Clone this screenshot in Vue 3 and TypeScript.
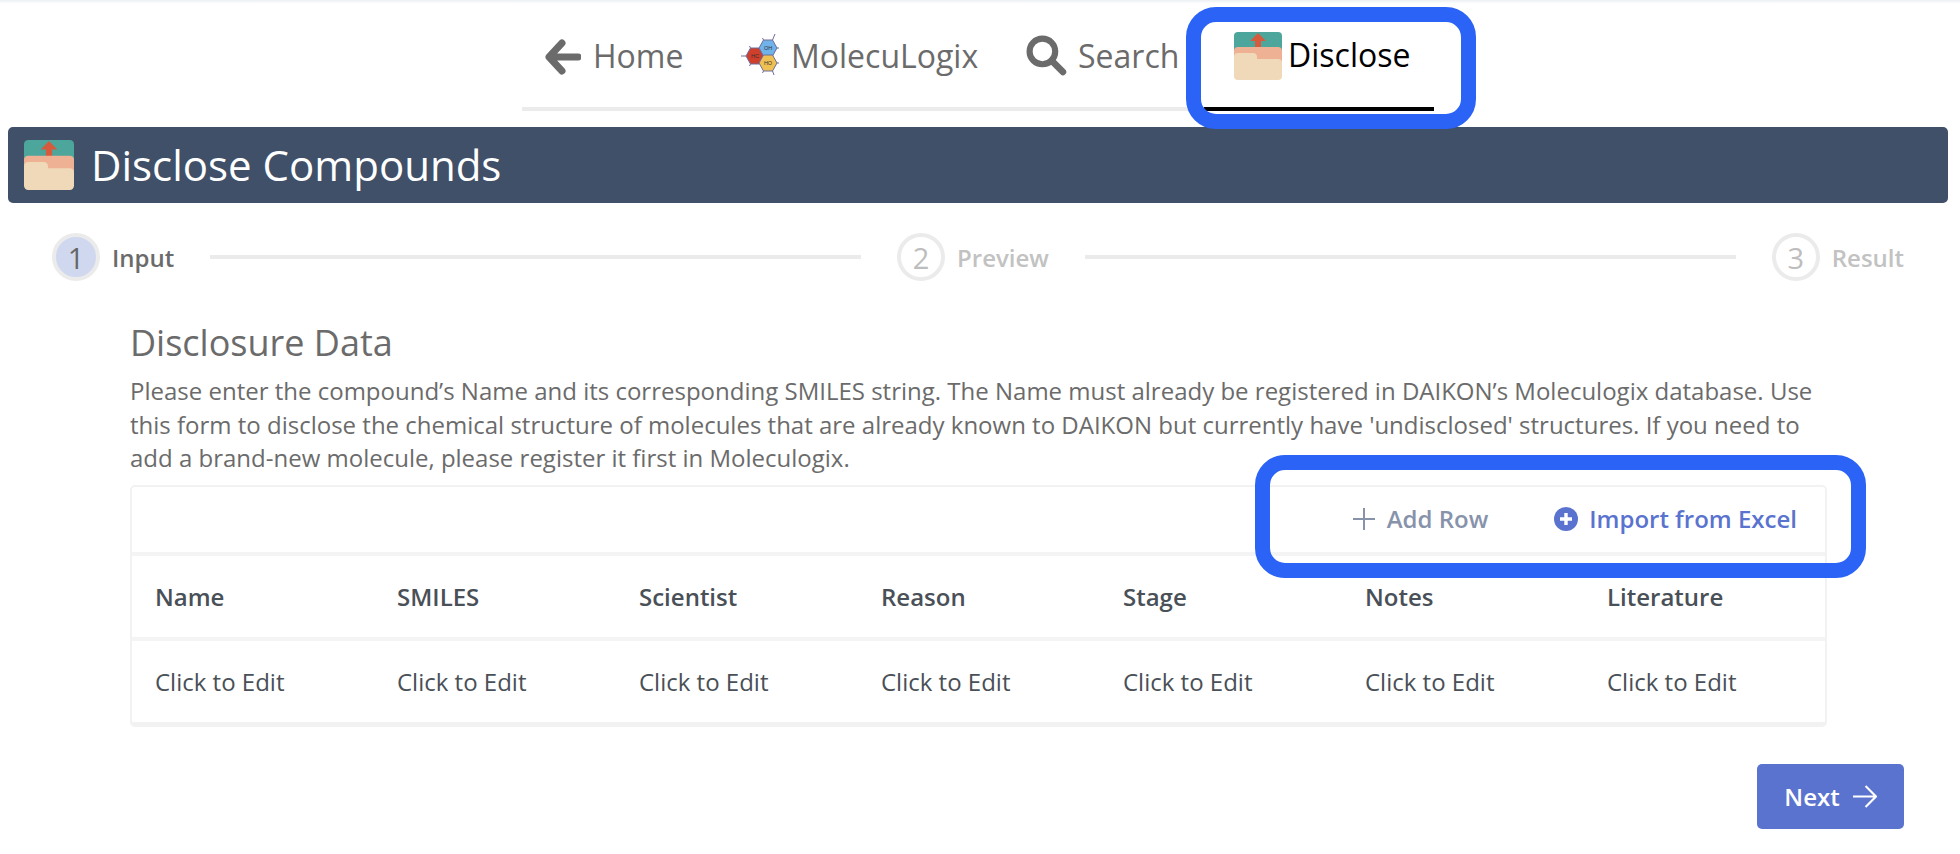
<script setup lang="ts">
const columns: string[] = ['Name', 'SMILES', 'Scientist', 'Reason', 'Stage', 'Notes', 'Literature']
</script>

<template>
  <div class="page">
    <div class="topshade"></div>
    <nav class="nav">
      <div class="tabs">
        <a class="tab tab-home">
          <svg class="ico-arrow" viewBox="0 0 36 36"><path d="M17 4 4 18l13 14M5 18h28" fill="none" stroke="#6b6b6b" stroke-width="7" stroke-linecap="round" stroke-linejoin="round" /></svg>
          <span>Home</span>
        </a>
        <a class="tab tab-mol">
          <svg class="ico-mol" viewBox="0 0 38 42">
            <g stroke="#6d6d9a" stroke-width="1">
              <path d="M0 22h5M31.500 6 34 0M36 14h2M36 29h2M31.500 37 33 41M22.500 6l-1-2M22.500 37l-1 2M9.500 14l-1-2M9.500 30l-1 2" fill="none" />
              <path d="M5 22l4.500-8h9l4.500 8-4.500 8h-9z" fill="#cf3f2b" />
              <path d="M18 14l4.500-8h9l4.500 8-4.500 8h-9z" fill="#70b2ea" />
              <path d="M18 29l4.500-8h9l4.500 8-4.500 8h-9z" fill="#efc053" />
            </g>
            <g class="mol-txt" font-size="5.500" text-anchor="middle" fill="#333">
              <text x="14" y="24">HC</text>
              <text x="27" y="16">OH</text>
              <text x="27" y="31">HO</text>
            </g>
          </svg>
          <span>MolecuLogix</span>
        </a>
        <a class="tab tab-search">
          <svg class="ico-search" viewBox="0 0 40 40"><circle cx="16" cy="16" r="12.500" fill="none" stroke="#6b6b6b" stroke-width="6" /><path d="M25 25l11 11" stroke="#6b6b6b" stroke-width="6.500" stroke-linecap="round" /></svg>
          <span>Search</span>
        </a>
        <a class="tab tab-active">
          <svg class="ico-folder" viewBox="0 0 48 48">
            <rect width="48" height="40" rx="4" fill="#4ca69c" />
            <path d="M24 1l8 8h-5v8h-6V9h-5z" fill="#d65b3c" />
            <path d="M0 19a4 4 0 0 1 4-4h40a4 4 0 0 1 4 4v25H0z" fill="#eeb193" />
            <path d="M0 25a4 4 0 0 1 4-4h15a4 4 0 0 1 4 4v2h21a4 4 0 0 1 4 4v13a4 4 0 0 1-4 4H4a4 4 0 0 1-4-4z" fill="#f0d9b8" />
          </svg>
          <span>Disclose</span>
        </a>
      </div>
    </nav>

    <header class="banner">
      <svg class="ico-banner" viewBox="0 0 48 48">
        <rect width="48" height="40" rx="4" fill="#4ca69c" />
        <path d="M24 1l8 8h-5v8h-6V9h-5z" fill="#d65b3c" />
        <path d="M0 19a4 4 0 0 1 4-4h40a4 4 0 0 1 4 4v25H0z" fill="#eeb193" />
        <path d="M0 25a4 4 0 0 1 4-4h15a4 4 0 0 1 4 4v2h21a4 4 0 0 1 4 4v13a4 4 0 0 1-4 4H4a4 4 0 0 1-4-4z" fill="#f0d9b8" />
      </svg>
      <h1>Disclose Compounds</h1>
    </header>

    <div class="steps">
      <div class="step step-on"><span class="num">1</span><span class="label">Input</span></div>
      <div class="line"></div>
      <div class="step"><span class="num">2</span><span class="label">Preview</span></div>
      <div class="line"></div>
      <div class="step"><span class="num">3</span><span class="label">Result</span></div>
    </div>

    <main class="content">
      <h2>Disclosure Data</h2>
      <p class="desc">Please enter the compound’s Name and its corresponding SMILES string. The Name must already be registered in DAIKON’s Moleculogix database. Use this form to disclose the chemical structure of molecules that are already known to DAIKON but currently have 'undisclosed' structures. If you need to add a brand-new molecule, please register it first in Moleculogix.</p>

      <section class="table">
        <div class="toolbar">
          <button class="tbtn tbtn-grey">
            <svg class="ico-plus" viewBox="0 0 24 24"><path d="M12 1v22M1 12h22" stroke="#8793ab" stroke-width="2" fill="none" /></svg>
            <span>Add Row</span>
          </button>
          <button class="tbtn tbtn-blue">
            <svg class="ico-cplus" viewBox="0 0 24 24"><circle cx="12" cy="12" r="12" fill="#5a73cf" /><path d="M12 6v12M6 12h12" stroke="#fff" stroke-width="3.400" fill="none" /></svg>
            <span>Import from Excel</span>
          </button>
        </div>
        <div class="grid head">
          <div v-for="c in columns" :key="c" class="cell">{{ c }}</div>
        </div>
        <div class="grid body">
          <div v-for="c in columns" :key="c" class="cell">Click to Edit</div>
        </div>
      </section>

      <div class="actions">
        <button class="next">
          <span>Next</span>
          <svg class="ico-next" viewBox="0 0 24 24"><path d="M1 12h22M13 2l10 10-10 10" fill="none" stroke="#fff" stroke-width="2" /></svg>
        </button>
      </div>
    </main>

    <div class="mark mark-tab"></div>
    <div class="mark mark-tools"></div>
  </div>
</template>

<style>
html, body { margin: 0; background: #fff; }
</style>

<style scoped>
* { box-sizing: border-box; }
.page {
  position: relative;
  width: 1960px;
  height: 854px;
  overflow: hidden;
  background: #fff;
  font-family: "Open Sans", "Noto Sans", sans-serif;
  color: #6b6b6b;
}
.topshade {
  height: 3px;
  background: linear-gradient(#eceff3, #fbfcfd);
}
.nav {
  display: flex;
  padding-left: 522px;
  height: 108px;
}
.tabs {
  display: flex;
  width: 912px;
  height: 108px;
  border-bottom: 4px solid #ebebeb;
  font-size: 32px;
}
.tab {
  display: flex;
  align-items: flex-start;
  height: 108px;
  padding-top: 31px;
  line-height: 44px;
}
.tab-home { width: 200px; padding-left: 23px; }
.tab-home span { margin-left: 12px; }
.tab-mol { width: 304px; padding-left: 19px; }
.tab-mol span { margin-left: 12px; }
.tab-search { width: 178px; }
.tab-search span { margin-left: 11px; }
.tab-active {
  width: 230px;
  padding-top: 29px;
  padding-left: 30px;
  color: #000;
  border-bottom: 4px solid #000;
}
.tab-active span { margin-left: 6px; line-height: 46px; }
.ico-arrow { width: 36px; height: 36px; margin-top: 5px; }
.ico-mol { width: 38px; height: 42px; }
.ico-search { width: 41px; height: 41px; margin-top: 1px; }
.ico-folder { width: 48px; height: 48px; }
.mol-txt { font-family: "Liberation Sans", sans-serif; }

.banner {
  display: flex;
  align-items: center;
  margin: 16px 12px 0 8px;
  height: 76px;
  padding-left: 16px;
  background: #3f5068;
  border-radius: 5px;
  color: #fff;
}
.ico-banner { width: 50px; height: 50px; }
.banner h1 {
  margin: 0 0 0 17px;
  font-size: 42px;
  font-weight: 400;
  line-height: 50px;
}

.steps {
  display: flex;
  align-items: center;
  margin-top: 30px;
  padding: 0 56px 0 52px;
  height: 48px;
}
.step { display: flex; align-items: center; gap: 12px; }
.num {
  width: 48px;
  height: 48px;
  border-radius: 50%;
  border: 4px solid #ebebeb;
  display: flex;
  align-items: center;
  justify-content: center;
  font-size: 29px;
  color: #bdbdbd;
  background: #fff;
}
.label { font-size: 24px; font-weight: 600; color: #c2c2c2; }
.step-on .num { background: #d0d8f0; color: #666; }
.step-on .label { color: #6b6b6b; }
.line { flex: 1; height: 4px; background: #ebebeb; margin: 0 36px; }

.content { padding: 0 56px 0 130px; }
h2 {
  margin: 39px 0 0;
  font-size: 36px;
  font-weight: 400;
  line-height: 46px;
  color: #6b6b6b;
}
.desc {
  margin: 8px 0 0;
  width: 1700px;
  font-size: 24px;
  line-height: 33.600px;
  color: #6b6b6b;
}
.table {
  margin-top: 10px;
  width: 1697px;
  border: 2px solid #f2f2f2;
  border-bottom-width: 5px;
  border-radius: 5px;
}
.toolbar {
  display: flex;
  justify-content: flex-end;
  align-items: center;
  height: 69px;
  border-bottom: 4px solid #f4f4f4;
  padding-right: 28px;
  gap: 66px;
}
.tbtn {
  display: flex;
  align-items: center;
  border: 0;
  padding: 0;
  background: none;
  font: inherit;
  font-size: 24px;
  font-weight: 600;
  line-height: 30px;
}
.tbtn-grey { color: #8793ab; }
.tbtn-blue { color: #5a73cf; }
.ico-plus { width: 24px; height: 24px; margin-right: 11px; }
.ico-cplus { width: 24px; height: 24px; margin-right: 11px; }
.grid {
  display: grid;
  grid-template-columns: repeat(7, 242px);
  align-items: center;
}
.cell { padding-left: 23px; }
.head { height: 85px; border-bottom: 4px solid #f4f4f4; font-size: 24px; font-weight: 600; color: #495057; }
.body { height: 81px; font-size: 24px; color: #495057; }
.actions { display: flex; justify-content: flex-end; margin-top: 37px; }
.next {
  display: flex;
  align-items: center;
  justify-content: center;
  width: 147px;
  height: 65px;
  background: #5a73cf;
  border: 0;
  border-radius: 5px;
  color: #fff;
  font: inherit;
  font-size: 24px;
  font-weight: 600;
  gap: 12px;
}
.ico-next { width: 25px; height: 25px; }
.mark {
  position: absolute;
  border: 15px solid #2b63f6;
  border-radius: 30px;
  pointer-events: none;
}
.mark-tab { left: 1186px; top: 7px; width: 290px; height: 122px; }
.mark-tools { left: 1255px; top: 455px; width: 611px; height: 123px; }
</style>
